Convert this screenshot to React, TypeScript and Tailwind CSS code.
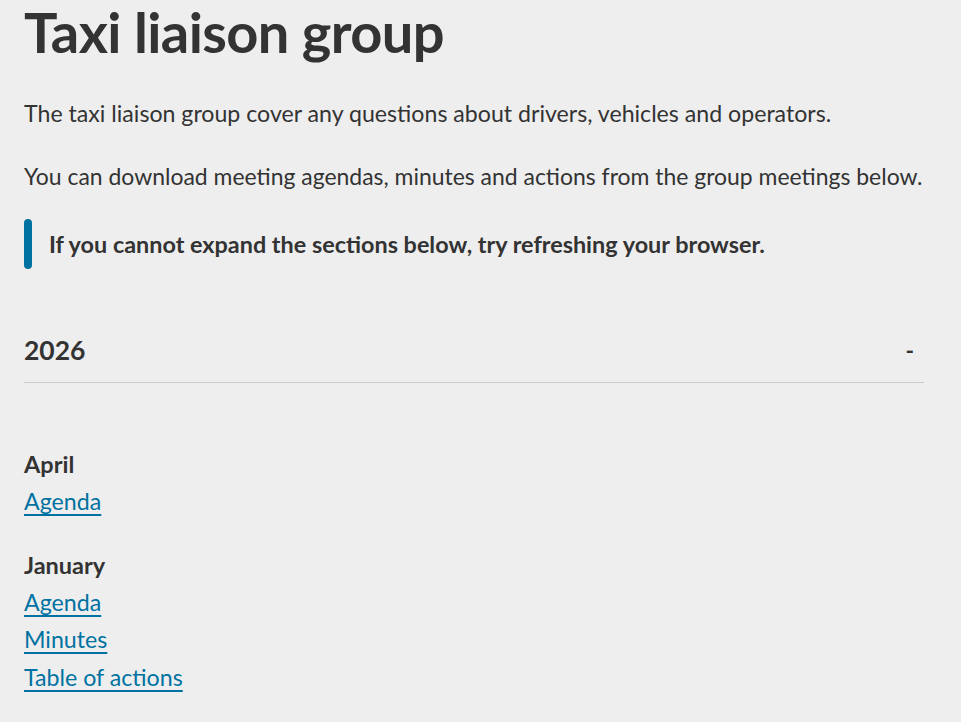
export default function App() {
  return (
    <div className="min-h-screen bg-[#eeeeee] text-[#333333]" style={{ fontFamily: 'Lato, "Noto Sans", sans-serif' }}>
      <div className="ml-6 w-[900px]">
        <h1 className="text-[56px] font-bold leading-[63px] tracking-[-0.6px]">Taxi liaison group</h1>
        <p className="mt-[33px] text-[23.15px] leading-[34px]">
          The taxi liaison group cover any questions about drivers, vehicles and operators.
        </p>
        <p className="mt-[29px] whitespace-nowrap text-[22.95px] leading-[34px]">
          You can download meeting agendas, minutes and actions from the group meetings below.
        </p>
        <div className="mt-[26px] flex items-center gap-[17px]">
          <span className="h-[50px] w-[8px] rounded-full bg-[#0072a2]" />
          <p className="text-[23.4px] font-bold leading-[34px]">
            If you cannot expand the sections below, try refreshing your browser.
          </p>
        </div>
        <div className="mt-[63px] flex items-center justify-between border-b border-[#cccccc] pb-[14px]">
          <h2 className="text-[26.5px] font-bold leading-[36px]">2026</h2>
          <span className="mr-[10px] text-[23px] font-bold leading-[36px]">-</span>
        </div>
        <div className="mt-[63px] text-[23.2px] leading-[37px]">
          <p className="text-[23.5px] font-bold">April</p>
          <a href="#" className="block w-fit text-[#0072a2] underline underline-offset-[4px]">Agenda</a>
          <p className="mt-[27px] text-[23.5px] font-bold">January</p>
          <a href="#" className="block w-fit text-[#0072a2] underline underline-offset-[4px]">Agenda</a>
          <a href="#" className="block w-fit text-[#0072a2] underline underline-offset-[4px]">Minutes</a>
          <a href="#" className="mt-[1px] block w-fit text-[#0072a2] underline underline-offset-[4px]">Table of actions</a>
        </div>
      </div>
    </div>
  )
}
